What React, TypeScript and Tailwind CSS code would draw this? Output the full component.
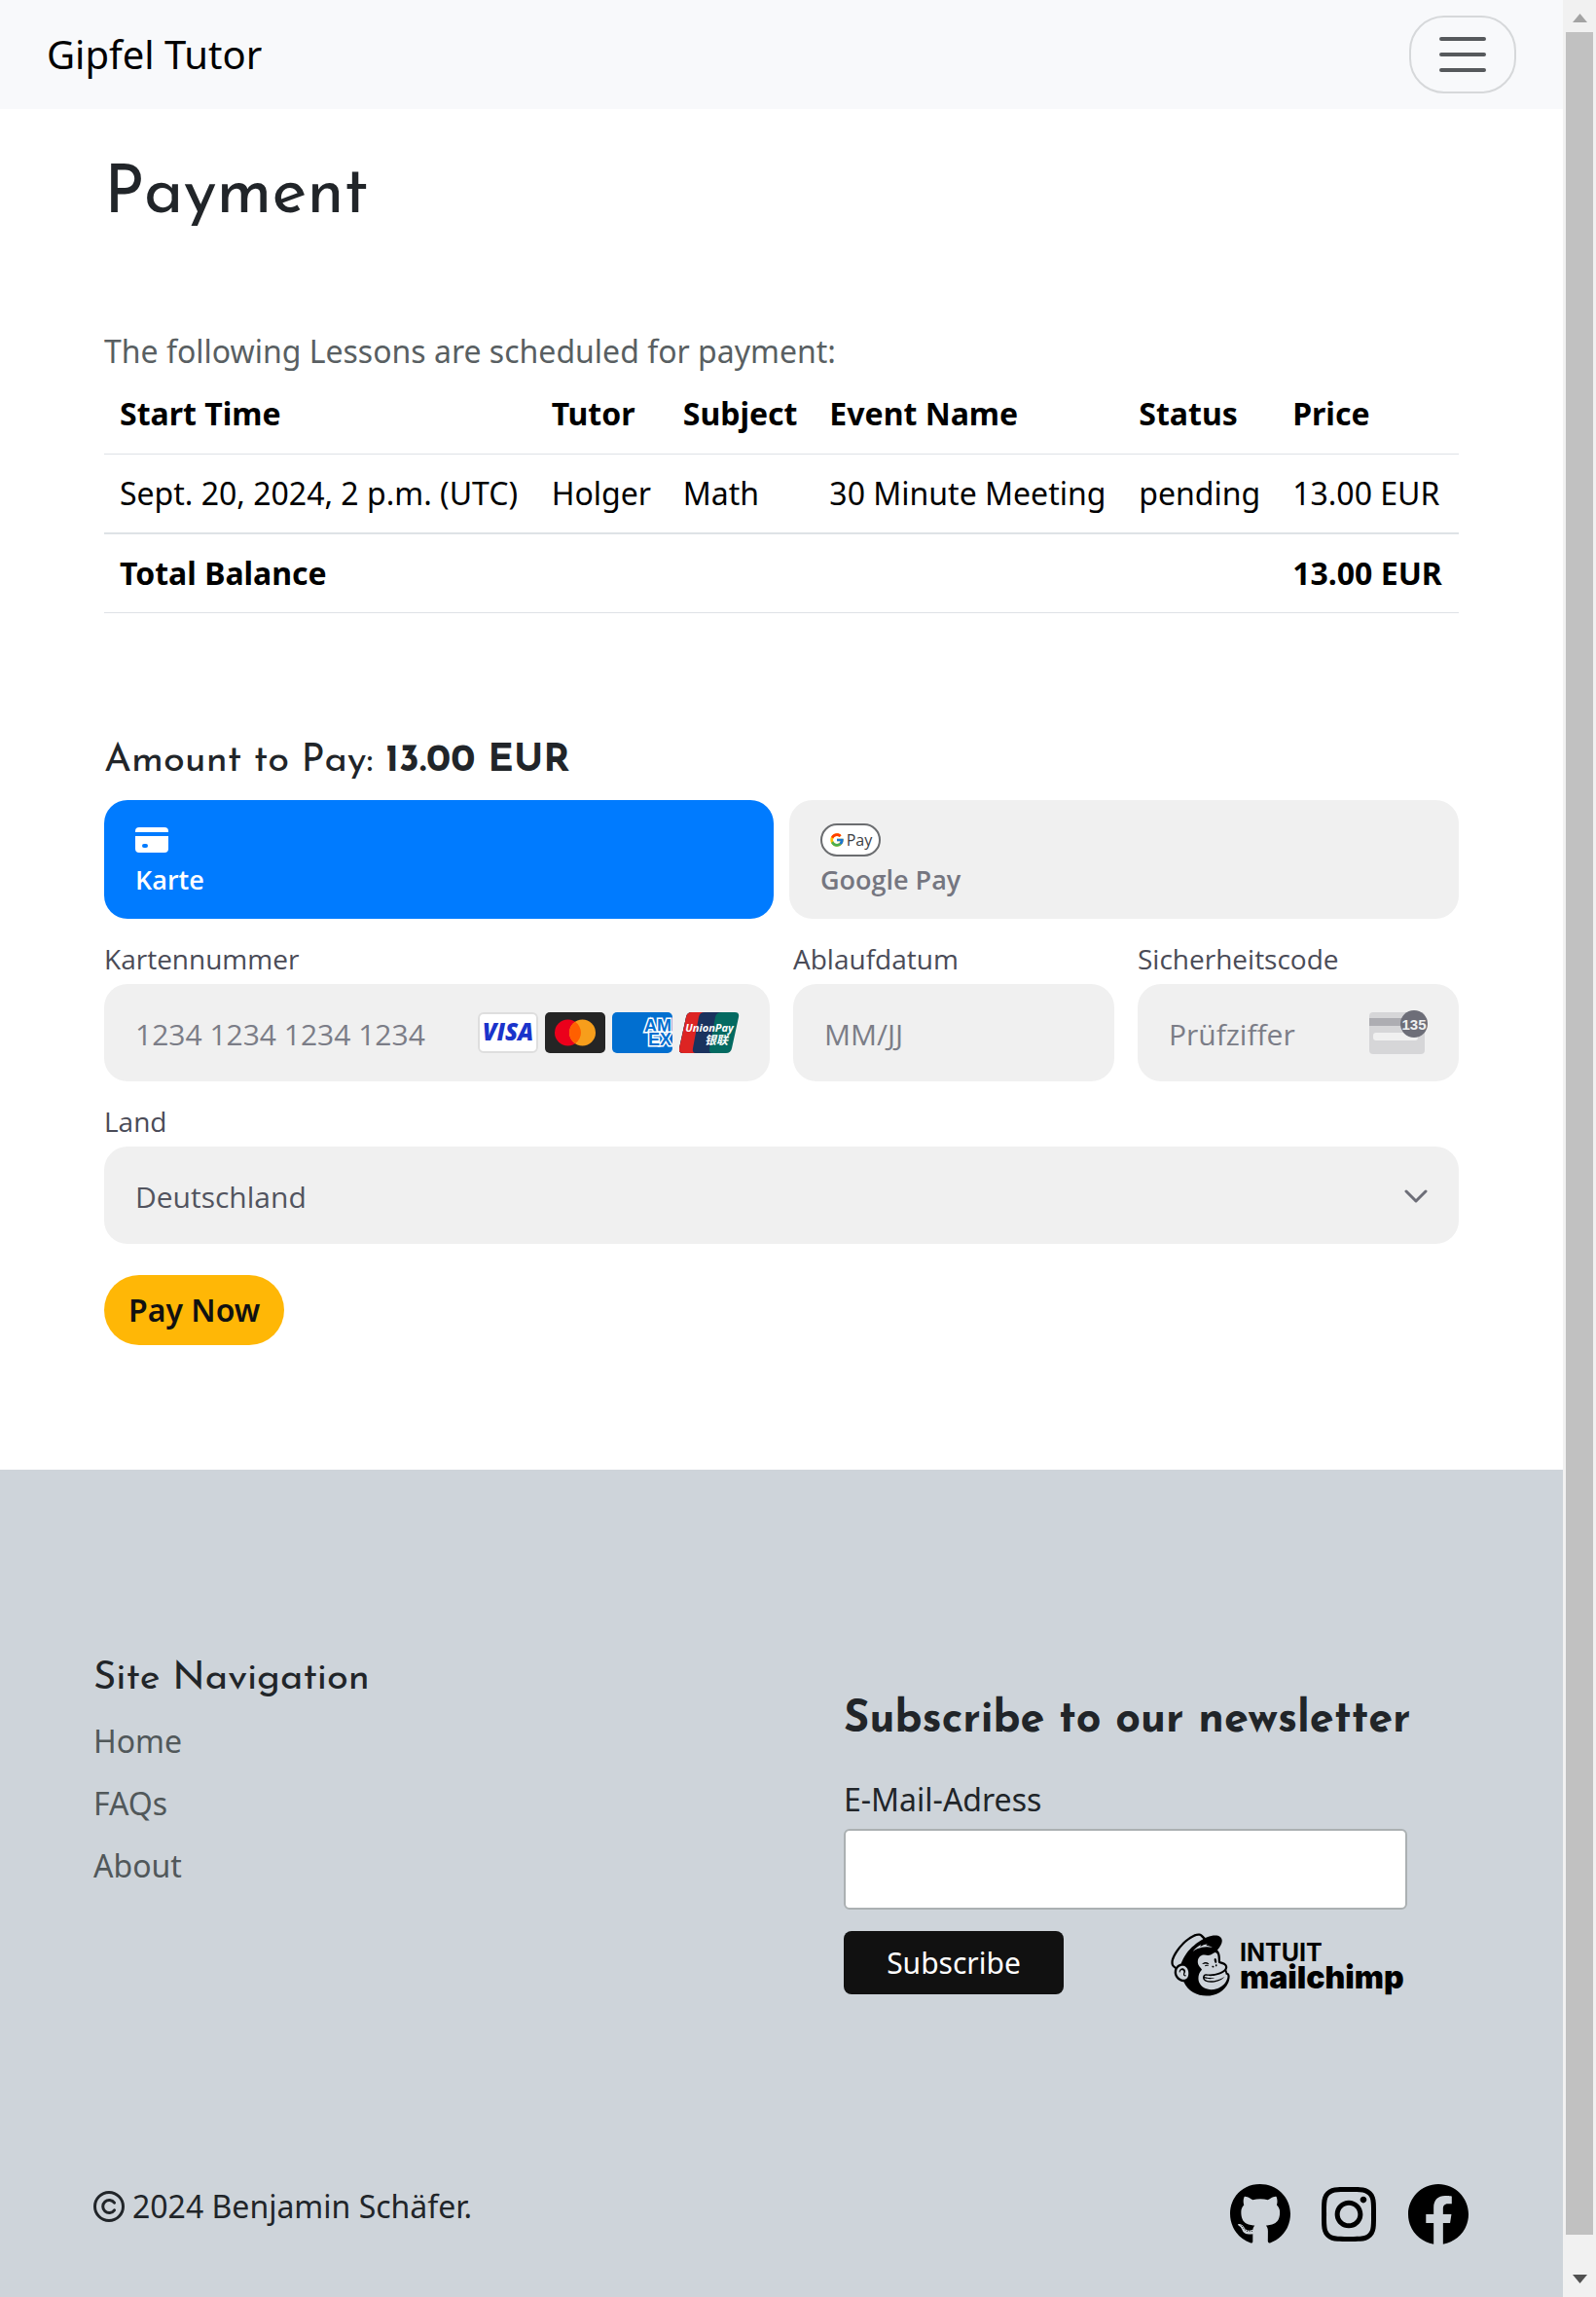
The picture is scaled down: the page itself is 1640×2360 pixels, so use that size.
import React from "react";
import { FaFacebook, FaGithub, FaInstagram, FaMailchimp } from "react-icons/fa";
import { FcGoogle } from "react-icons/fc";

const heading = "font-['Josefin_Sans',Lato,sans-serif]";
const field =
  "h-[100px] w-full rounded-3xl bg-[#f0f0f0] px-8 pt-[3px] text-[30px] font-['Segoe_UI','Open_Sans',sans-serif] text-[#52545f] placeholder:text-[#7b7d87] outline-none";
const fieldLabel =
  "block text-[28px] leading-8 font-['Segoe_UI','Open_Sans',sans-serif] text-[#4a4b57]";

const lessons = [
  {
    start: "Sept. 20, 2024, 2 p.m. (UTC)",
    tutor: "Holger",
    subject: "Math",
    event: "30 Minute Meeting",
    status: "pending",
    price: "13.00 EUR",
  },
];

function NavBar() {
  return (
    <nav className="flex h-28 items-center justify-between bg-[#f8f9fb] px-12">
      <a href="#" className="text-[40px] leading-[60px] text-black">
        Gipfel Tutor
      </a>
      <button
        type="button"
        aria-label="Toggle navigation"
        className="flex h-20 w-[110px] items-center justify-center rounded-[36px] border-2 border-[#d6d8da]"
      >
        <svg viewBox="0 0 30 30" className="h-[60px] w-[60px]" fill="none">
          <path
            d="M4 7h22M4 15h22M4 23h22"
            stroke="#56595c"
            strokeWidth="2"
            strokeLinecap="round"
          />
        </svg>
      </button>
    </nav>
  );
}

function LessonTable() {
  const head = "px-4 pt-4 pb-[17px]";
  const cell = "p-4";
  return (
    <table className="w-full border-collapse text-left whitespace-nowrap text-black">
      <thead>
        <tr className="border-b border-[#dee2e6] font-bold">
          <th className={head}>Start Time</th>
          <th className={head}>Tutor</th>
          <th className={head}>Subject</th>
          <th className={head}>Event Name</th>
          <th className={head}>Status</th>
          <th className={head}>Price</th>
        </tr>
      </thead>
      <tbody>
        {lessons.map((l) => (
          <tr key={l.start} className="border-b-2 border-[#dee2e6]">
            <td className={cell}>{l.start}</td>
            <td className={cell}>{l.tutor}</td>
            <td className={cell}>{l.subject}</td>
            <td className={cell}>{l.event}</td>
            <td className={cell}>{l.status}</td>
            <td className={cell}>{l.price}</td>
          </tr>
        ))}
        <tr className="border-b border-[#dee2e6] font-bold">
          <td className={cell} colSpan={5}>
            Total Balance
          </td>
          <td className={cell}>13.00 EUR</td>
        </tr>
      </tbody>
    </table>
  );
}

function CardBrands() {
  const svg = "h-[42px] w-[62px]";
  return (
    <div className="pointer-events-none absolute inset-y-0 right-[31px] flex items-center gap-[7px]">
      <svg viewBox="0 0 62 42" className={svg} role="img" aria-label="Visa">
        <rect x="1" y="1" width="60" height="40" rx="5" fill="#fff" stroke="#dedede" strokeWidth="2" />
        <text
          x="31"
          y="29"
          textAnchor="middle"
          fontFamily="Open Sans, sans-serif"
          fontWeight="800"
          fontStyle="italic"
          fontSize="24"
          fill="#1a34cb"
        >
          VISA
        </text>
      </svg>
      <svg viewBox="0 0 62 42" className={svg} role="img" aria-label="Mastercard">
        <rect width="62" height="42" rx="5" fill="#252525" />
        <circle cx="23.500" cy="21" r="13.500" fill="#eb001b" />
        <circle cx="38.500" cy="21" r="13.500" fill="#f79e1b" />
        <path d="M31 9.800a13.500 13.500 0 0 1 0 22.400a13.500 13.500 0 0 1 0-22.400Z" fill="#ff5f00" />
      </svg>
      <svg viewBox="0 0 62 42" className={svg} role="img" aria-label="American Express">
        <clipPath id="amex-card">
          <rect width="62" height="42" rx="5" />
        </clipPath>
        <g clipPath="url(#amex-card)">
          <rect width="62" height="42" fill="#016fd0" />
          <g
            fontFamily="Liberation Sans, sans-serif"
            fontWeight="700"
            fontSize="18"
            fill="#016fd0"
            stroke="#fff"
            strokeWidth="3"
            paintOrder="stroke"
          >
            <text x="33" y="20">AM</text>
            <text x="37" y="34">EX</text>
          </g>
        </g>
      </svg>
      <svg viewBox="0 0 62 42" className={svg} role="img" aria-label="UnionPay">
        <clipPath id="union-card">
          <path d="M13 0H57q5 0 4 5L54 37q-1 5-6 5H4q-5 0-4-5L7 5q1-5 6-5Z" />
        </clipPath>
        <g clipPath="url(#union-card)">
          <rect width="62" height="42" fill="#046a61" />
          <path d="M0 0H44Q38 0 37 5L31 37Q30 42 34 42H0Z" fill="#1a325e" />
          <path d="M0 0H26Q21 0 20 5L14 37Q13 42 17 42H0Z" fill="#dd2423" />
        </g>
        <text
          x="31"
          y="20"
          textAnchor="middle"
          fontFamily="Open Sans, sans-serif"
          fontWeight="700"
          fontStyle="italic"
          fontSize="11"
          fill="#fff"
        >
          UnionPay
        </text>
        <text
          x="38"
          y="33"
          textAnchor="middle"
          fontFamily="Noto Sans CJK SC, sans-serif"
          fontWeight="700"
          fontStyle="italic"
          fontSize="12"
          fill="#fff"
        >
          银联
        </text>
      </svg>
    </div>
  );
}

function CvcIcon() {
  return (
    <svg
      viewBox="0 0 60 45"
      className="pointer-events-none absolute top-[27px] right-8 h-[45px] w-[60px]"
      role="img"
      aria-label="135"
    >
      <rect y="2" width="57" height="43" rx="4" fill="#d6d6d8" />
      <rect y="8" width="57" height="8" fill="#adadb2" />
      <rect x="4" y="23" width="46" height="8" rx="3" fill="#f0f0f0" />
      <circle cx="46" cy="14" r="14" fill="#6d6e78" />
      <text
        x="46"
        y="20"
        textAnchor="middle"
        fontFamily="Liberation Sans, sans-serif"
        fontWeight="700"
        fontSize="15"
        fill="#f0f0f0"
      >
        135
      </text>
    </svg>
  );
}

function PaymentForm() {
  const method =
    "flex h-[122px] flex-col items-start rounded-3xl px-8 text-[27px] leading-8 font-semibold font-['Segoe_UI','Open_Sans',sans-serif]";
  return (
    <form onSubmit={(e) => e.preventDefault()}>
      <div className="grid grid-cols-2 gap-4">
        <button type="button" aria-pressed="true" className={`${method} bg-[#007bff] text-white`}>
          <span className="flex h-[66px] items-end">
            <svg viewBox="0 0 34 26" className="mb-3 h-[26px] w-[34px]" fill="currentColor">
              <path d="M4 0h26a4 4 0 0 1 4 4v1H0V4a4 4 0 0 1 4-4Z" />
              <path
                fillRule="evenodd"
                d="M0 9h34v13a4 4 0 0 1-4 4H4a4 4 0 0 1-4-4V9Zm9 8a2 2 0 0 0 0 4h2a2 2 0 0 0 0-4H9Z"
              />
            </svg>
          </span>
          Karte
        </button>
        <button type="button" aria-pressed="false" className={`${method} bg-[#f0f0f0] text-[#757680]`}>
          <span className="flex h-[66px] items-end">
            <span className="mb-2 flex h-[34px] w-[62px] items-center justify-center gap-0.5 rounded-full border-2 border-[#6b6d70] bg-white font-['Open_Sans',sans-serif] text-base font-medium text-[#3c4043]">
              <FcGoogle className="h-4 w-4" />
              Pay
            </span>
          </span>
          Google Pay
        </button>
      </div>

      <div className="mt-[25px] grid grid-cols-4 gap-x-6">
        <div className="col-span-2">
          <label htmlFor="number" className={fieldLabel}>
            Kartennummer
          </label>
          <div className="relative mt-[10px]">
            <input id="number" placeholder="1234 1234 1234 1234" className={field} />
            <CardBrands />
          </div>
        </div>
        <div>
          <label htmlFor="expiry" className={fieldLabel}>
            Ablaufdatum
          </label>
          <input id="expiry" placeholder="MM/JJ" className={`${field} mt-[10px]`} />
        </div>
        <div>
          <label htmlFor="cvc" className={fieldLabel}>
            Sicherheitscode
          </label>
          <div className="relative mt-[10px]">
            <input id="cvc" placeholder="Prüfziffer" className={field} />
            <CvcIcon />
          </div>
        </div>
      </div>

      <div className="mt-[25px]">
        <label htmlFor="country" className={fieldLabel}>
          Land
        </label>
        <div className="relative mt-[10px]">
          <select id="country" className={`${field} appearance-none`}>
            <option>Deutschland</option>
          </select>
          <svg
            viewBox="0 0 24 14"
            className="pointer-events-none absolute top-[44px] right-8 h-[14px] w-6"
            fill="none"
          >
            <path
              d="M2 2l10 10L22 2"
              stroke="#6d6e78"
              strokeWidth="3"
              strokeLinecap="round"
              strokeLinejoin="round"
            />
          </svg>
        </div>
      </div>

      <button
        type="submit"
        className="mt-8 h-[72px] rounded-full bg-[#ffb706] px-[25px] leading-[48px] font-semibold text-[#111]"
      >
        Pay Now
      </button>
    </form>
  );
}

function MailchimpLogo() {
  return (
    <a href="#" aria-label="Intuit Mailchimp" className="mt-1 flex items-center gap-1 text-black">
      <FaMailchimp className="h-[73px] w-[73px]" />
      <svg viewBox="0 0 172 64" className="h-16 w-[172px]" fill="#000">
        <text x="0" y="28" fontFamily="Inter, sans-serif" fontWeight="700" fontSize="25">
          INTUIT
        </text>
        <text x="0" y="56" fontFamily="Inter, sans-serif" fontWeight="900" fontSize="32">
          mailchimp
        </text>
      </svg>
    </a>
  );
}

function CopyrightIcon() {
  return (
    <svg
      viewBox="0 0 32 32"
      className="h-8 w-8"
      fill="none"
      stroke="currentColor"
      strokeWidth="3"
      strokeLinecap="round"
      aria-hidden="true"
    >
      <circle cx="16" cy="16" r="14.500" />
      <path d="M21.500 12.200a6.500 6.500 0 1 0 0 7.600" />
    </svg>
  );
}

function Footer() {
  return (
    <footer className="flex flex-1 flex-col justify-between bg-[#ced4da] px-24 pt-[185px] pb-[53px] text-[#212529]">
      <div className="grid grid-cols-2">
        <div>
          <h5 className={`${heading} text-[40px] leading-[60px]`}>Site Navigation</h5>
          <ul className="mt-[10px] text-[#51585a]">
            <li className="mb-4">
              <a href="#">Home</a>
            </li>
            <li className="mb-4">
              <a href="#">FAQs</a>
            </li>
            <li>
              <a href="#">About</a>
            </li>
          </ul>
        </div>
        <form className="px-16 pt-[43px]" onSubmit={(e) => e.preventDefault()}>
          <h2 className={`${heading} text-[45px] leading-[60px] font-bold whitespace-nowrap`}>
            Subscribe to our newsletter
          </h2>
          <label htmlFor="email" className="mt-[27px] block">
            E-Mail-Adress
          </label>
          <input
            id="email"
            type="email"
            className="mt-[6px] block h-[83px] w-full rounded-md border-2 border-[#abb0b2] bg-white px-4 outline-none"
          />
          <div className="mt-[22px] flex h-[65px] items-center justify-between">
            <button
              type="submit"
              className="h-[65px] w-[226px] rounded-lg bg-[#111] text-[30px] text-white"
            >
              Subscribe
            </button>
            <MailchimpLogo />
          </div>
        </form>
      </div>
      <div className="flex items-start justify-between">
        <p className="flex items-center gap-2">
          <CopyrightIcon />
          2024 Benjamin Schäfer.
        </p>
        <div className="flex gap-8 text-black">
          <a href="#" aria-label="GitHub">
            <FaGithub className="h-16 w-[62px]" />
          </a>
          <a href="#" aria-label="Instagram">
            <FaInstagram className="h-16 w-14" />
          </a>
          <a href="#" aria-label="Facebook">
            <FaFacebook className="h-16 w-16" />
          </a>
        </div>
      </div>
    </footer>
  );
}

function ScrollBar() {
  return (
    <div aria-hidden="true" className="flex w-[34px] shrink-0 flex-col items-center bg-[#f1f1f1]">
      <svg viewBox="0 0 34 33" className="h-[33px] w-[34px]">
        <path d="M10 23h15L17.500 14Z" fill="#a3a3a3" />
      </svg>
      <div className="w-7 flex-1 bg-[#c1c1c1]" />
      <svg viewBox="0 0 34 64" className="h-16 w-[34px]">
        <path d="M10 41h15L17.500 50Z" fill="#505050" />
      </svg>
    </div>
  );
}

export default function App() {
  return (
    <div className="flex min-h-screen bg-white font-['Noto_Sans',sans-serif] text-[32px] leading-[48px]">
      <div className="flex min-w-0 flex-1 flex-col">
        <NavBar />
        <main className="px-[107px] pt-[53px] pb-32">
          <h1 className={`${heading} text-[69px] leading-[72px] text-[#212529]`}>Payment</h1>
          <p className="mt-[100px] text-[#595f62]">The following Lessons are scheduled for payment:</p>
          <LessonTable />
          <h5 className={`${heading} mt-[124px] mb-[12px] text-[40px] leading-[56px] text-[#212529]`}>
            Amount to Pay: <strong className="font-bold">13.00 EUR</strong>
          </h5>
          <PaymentForm />
        </main>
        <Footer />
      </div>
      <ScrollBar />
    </div>
  );
}
